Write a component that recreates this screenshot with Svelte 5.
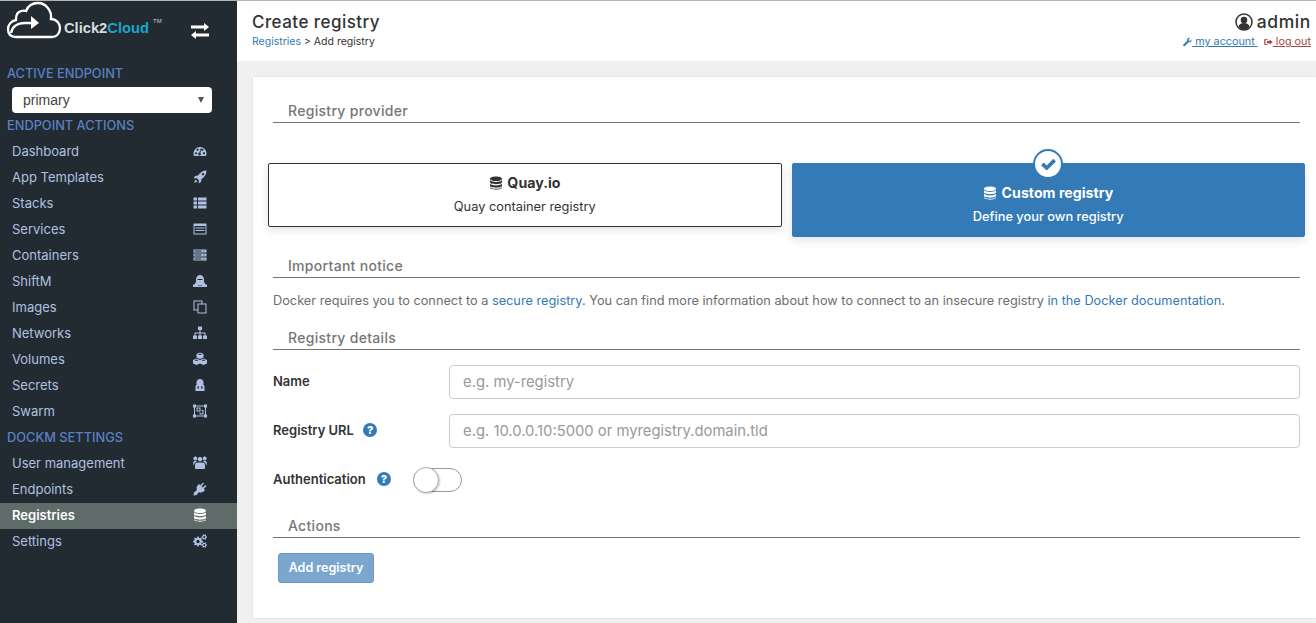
<script>
  function gear(cx, cy, R, r, hole, n) {
    const pts = [];
    const step = (Math.PI * 2) / n;
    for (let i = 0; i < n; i++) {
      const a = i * step;
      const w = step * 0.22;
      const at = (rad, ang) => `${(cx + rad * Math.cos(ang)).toFixed(2)} ${(cy + rad * Math.sin(ang)).toFixed(2)}`;
      pts.push(at(r, a - w * 1.4), at(R, a - w * 0.8), at(R, a + w * 0.8), at(r, a + w * 1.4));
    }
    const ring = `M${cx} ${cy - hole}a${hole} ${hole} 0 1 0 .01 0Z`;
    return `M${pts.join('L')}Z${ring}`;
  }

  const icons = {
    dashboard: 'M1 12A6.500 6.500 0 1 1 13 12ZM3 8.200a1 1 0 1 0 .01 0ZM4.600 4.800a1 1 0 1 0 .01 0ZM9.400 4.800a1 1 0 1 0 .01 0ZM11 8.200a1 1 0 1 0 .01 0ZM7.300 9 8.600 4.200 8 4 6.300 8.800a1.300 1.300 0 1 0 1 .2Z',
    rocket: 'M13.500.5C9.500.5 7 2.500 5 5.500L2 6 .5 8.500 3.500 8 6 10.500 5.500 13.500 8 12 8.500 9C11.500 7 13.500 4.500 13.500.5ZM10 3a1.200 1.200 0 1 0 .01 0ZM2.500 9.500 1 13l3.500-1.500Z',
    stacks: 'M.5 1.500h3.500v3H.5ZM5 1.500h8.500v3H5ZM.5 5.500h3.500v3H.5ZM5 5.500h8.500v3H5ZM.5 9.500h3.500v3H.5ZM5 9.500h8.500v3H5Z',
    services: 'M.5 1.500h13v11H.5ZM1.500 4v7.500h11V4ZM2.500 5.500h9v1h-9ZM2.500 8h9v1h-9Z',
    containers: 'M.5 1.500h13v3H.5ZM1.500 2.500v1h7v-1ZM10.500 2.500v1h1v-1ZM.5 5.500h13v3H.5ZM1.500 6.500v1h7v-1ZM10.500 6.500v1h1v-1ZM.5 9.500h13v3H.5ZM1.500 10.500v1h7v-1ZM10.500 10.500v1h1v-1Z',
    ship: 'M3 5.500C3 2.500 5 1 7 1s4 1.500 4 4.500V8l1.500 2.500H14V13H0v-2.500h1.500L3 8ZM4.500 5v1h5V5ZM5 11.500h4v-.500H5Z',
    clone: 'M.5.5h9v3h4v10h-9v-3h-4ZM1.500 1.500v8h3v-6h4v-2ZM5.500 4.500v8h7v-8Z',
    sitemap: 'M5 .5h4v3.500H7.500v2.500h5V9.500H14V13H10V9.500h1.500V7.500h-4v2H9V13H5V9.500h1.500v-2h-4v2H4V13H0V9.500h1.500v-3h5V4H5Z',
    cubes: 'M7 .5 10.500 2v3.500L7 7 3.500 5.500V2ZM3.500 6.500 7 8v3.500L3.500 13 0 11.500V8ZM10.500 6.500 14 8v3.500L10.500 13 7 11.500V8ZM7 1.500 5 2.300 7 3.100 9 2.300ZM3.500 7.500 1.500 8.300l2 .8 2-.8ZM10.500 7.500l-2 .8 2 .8 2-.8Z',
    secret: 'M2.500 13V8l1-1V5C3.500 2.500 5 1 7 1s3.500 1.500 3.500 4v2l1 1v5ZM4.500 8.500v2H6v-2ZM8 8.500v2h1.500v-2Z',
    swarm: 'M0 .5h3v1h8v-1h3v3h-1v7h1v3h-3v-1H3v1H0v-3h1v-7H0ZM3 2.500v1H2v7h1v1h8v-1h1v-7h-1v-1ZM3.500 3.500h4v4h-4ZM4.500 4.500v2h2v-2ZM8.500 6h2v4.500h-4V8.500h1V9.500h2v-2.500h-1Z',
    users: 'M7 .9a2.300 2.300 0 1 0 .01 0ZM2.300.6a1.900 1.900 0 1 0 .01 0ZM11.700.6a1.900 1.900 0 1 0 .01 0ZM4.500 6.500h5c1.500 0 2.500 1 2.500 3V12c0 .6-.5 1-1 1H3c-.5 0-1-.4-1-1V9.500c0-2 1-3 2.500-3ZM.3 9V6.500C.3 5.500 1 5 1.800 5h2c-.3.3-.5.7-.4 1-1.300.3-2.200 1.300-2.400 3ZM13.700 9V6.500C13.700 5.500 13 5 12.200 5h-2c.3.3.5.7.4 1 1.300.3 2.200 1.300 2.400 3Z',
    plug: 'M10 .5 11 1.500 8.500 4.200 9.800 5.500 12.500 3 13.500 4 10.800 6.700 12 8 11 9C9.500 10.500 7.500 11 6 10L3.500 13 1 13.500.5 13 1 10.500 4 8C3 6.500 3.500 4.500 5 3L6 2 7.300 3.200Z',
    database: 'M7 .5c3 0 6 .8 6 2.200S10 5 7 5 1 4.100 1 2.700 4 .5 7 .5ZM1 4.300C2 5.500 4.500 6 7 6s5-.5 6-1.700v2C13 7.500 10 8.200 7 8.200S1 7.500 1 6.300ZM1 7.800C2 9 4.500 9.400 7 9.400s5-.4 6-1.600v2C13 11 10 11.700 7 11.700S1 11 1 9.800ZM1 11.200c1 1.100 3.500 1.500 6 1.500s5-.4 6-1.500v.6c0 1.100-3 1.900-6 1.900s-6-.8-6-1.900Z',
    cogs: gear(5, 7.500, 5, 3.800, 1.700, 8) + gear(11.300, 3, 2.800, 2, 0.9, 6) + gear(11.300, 11, 2.800, 2, 0.9, 6)
  };

  const actions = [
    ['Dashboard', 'dashboard'], ['App Templates', 'rocket'], ['Stacks', 'stacks'],
    ['Services', 'services'], ['Containers', 'containers'], ['ShiftM', 'ship'],
    ['Images', 'clone'], ['Networks', 'sitemap'], ['Volumes', 'cubes'],
    ['Secrets', 'secret'], ['Swarm', 'swarm']
  ];
  const settings = [
    ['User management', 'users'], ['Endpoints', 'plug'],
    ['Registries', 'database', true], ['Settings', 'cogs']
  ];
</script>

{#snippet navRow(item)}
  <li class="nav-row" class:active={item[2]}>
    <span>{item[0]}</span>
    <svg class="nav-icon" viewBox="0 0 14 14"><path fill-rule="evenodd" d={icons[item[1]]} /></svg>
  </li>
{/snippet}

{#snippet db()}
  <svg class="db" viewBox="0 0 14 14"><path fill-rule="evenodd" d={icons.database} /></svg>
{/snippet}

{#snippet help()}
  <span class="help">?</span>
{/snippet}

<div class="page">
  <aside class="sidebar">
    <div class="brand">
      <svg class="cloud" viewBox="0 0 54 36" fill="none" stroke="#fff" stroke-width="2.300">
        <path d="M9 35H45C50 35 53 31 53 26 53 21 49 17 44 17 45 9 39 1 31 1 25 1 21 4 19 9 16 8 12 9 10 12 9 14 9 16 9 18 4 19 1 23 1 27 1 32 4 35 9 35Z" />
        <path d="M4 31C5 25 10 21 18 21H24" />
        <path d="M24 14 32 21 24 27Z" fill="#fff" stroke="none" />
      </svg>
      <span class="brand-name">Click2<b>Cloud</b></span>
      <span class="tm">TM</span>
      <svg class="swap" viewBox="0 0 18 16" fill="#fff">
        <path d="M0 2.500h13V0l5 4-5 4V5.500H0ZM18 10.500H5V8l-5 4 5 4v-2.500h13Z" />
      </svg>
    </div>
    <div class="nav-title">ACTIVE ENDPOINT</div>
    <div class="select-wrap">
      <select><option>primary</option></select>
    </div>
    <div class="nav-title">ENDPOINT ACTIONS</div>
    <ul>
      {#each actions as item}{@render navRow(item)}{/each}
    </ul>
    <div class="nav-title">DOCKM SETTINGS</div>
    <ul>
      {#each settings as item}{@render navRow(item)}{/each}
    </ul>
  </aside>

  <main class="main">
    <header class="topbar">
      <div>
        <h1>Create registry</h1>
        <div class="crumbs"><a href="#registries">Registries</a> &gt; Add registry</div>
      </div>
      <div class="user">
        <div class="user-name">
          <svg viewBox="0 0 18 18" class="user-icon">
            <circle cx="9" cy="9" r="8" fill="#fff" stroke="#333" stroke-width="1.500" />
            <circle cx="9" cy="7" r="3.300" fill="#333" />
            <path d="M3.500 14c.5-3 2.500-4 5.500-4s5 1 5.500 4c-1.500 1.700-3.500 2.500-5.500 2.500S5 15.700 3.500 14Z" fill="#333" />
          </svg>
          admin
        </div>
        <div class="user-links">
          <svg viewBox="0 0 12 12" class="mini blue"><path d="M11.500 2.500 9.300 4.500 7.800 4 7.500 2.700 9.500.5C8 0 6.500.5 5.800 1.700 5.300 2.600 5.300 3.500 5.600 4.300L.6 9.300c-.6.600-.6 1.400 0 1.900s1.300.5 1.900 0l5-5c1 .4 2 .2 2.800-.5 1-.9 1.400-2.300 1.200-3.200Z" /></svg>
          <a class="account" href="#account">{' my account '}</a>
          <svg viewBox="0 0 12 12" class="mini red"><path fill-rule="evenodd" d="M1.500 2h3.500v1H2v6h3v1H1.500C.7 10 .3 9.500.3 9V3c0-.5.400-1 1.200-1ZM4 4.500h3.500V2.500L11.500 6 7.500 9.500v-2H4Z" /></svg>
          <a class="logout" href="#logout">{' log out'}</a>
        </div>
      </div>
    </header>

    <section class="card">
      <h2 class="section first">Registry provider</h2>
      <div class="providers">
        <div class="provider">
          <div class="p-title">{@render db()} Quay.io</div>
          <div class="p-sub">Quay container registry</div>
        </div>
        <div class="provider selected">
          <span class="tick">
            <svg viewBox="0 0 14 14"><path d="M1.500 7.500 3.500 5.500 5.700 7.700 10.500 2.800 12.500 4.800 5.700 11.500Z" fill="#337ab7" /></svg>
          </span>
          <div class="p-title">{@render db()} Custom registry</div>
          <div class="p-sub">Define your own registry</div>
        </div>
      </div>

      <h2 class="section notice-head">Important notice</h2>
      <p class="notice">Docker requires you to connect to a <a href="#secure">secure registry</a>. You can find more information about how to connect to an insecure registry <a href="#docs">in the Docker documentation</a>.</p>

      <h2 class="section details-head">Registry details</h2>
      <div class="field name-field">
        <label for="name">Name</label>
        <input id="name" placeholder="e.g. my-registry" />
      </div>
      <div class="field url-field">
        <label for="url">Registry URL {@render help()}</label>
        <input id="url" placeholder="e.g. 10.0.0.10:5000 or myregistry.domain.tld" />
      </div>
      <div class="auth">
        <span class="auth-label">Authentication {@render help()}</span>
        <span class="toggle"><span class="knob"></span></span>
      </div>

      <h2 class="section actions-head">Actions</h2>
      <button class="submit" disabled>Add registry</button>
    </section>
  </main>
</div>

<style>
  :global(body) {
    margin: 0;
    background: #f0f0f0;
  }
  .page {
    display: flex;
    width: 1316px;
    height: 623px;
    overflow: hidden;
    font-family: Inter, "Noto Sans", sans-serif;
    font-size: 13px;
    color: #333;
  }
  .sidebar {
    flex: 0 0 237px;
    background: #212b31;
    border-top: 1px solid #b4b4b4;
    box-sizing: border-box;
    color: #b1c0e0;
  }
  .brand {
    position: relative;
    height: 60px;
  }
  .cloud {
    position: absolute;
    left: 7px;
    top: 1px;
    width: 54px;
    height: 36px;
    overflow: visible;
  }
  .brand-name {
    position: absolute;
    left: 64px;
    top: 19px;
    font: 700 14.700px "Liberation Sans", sans-serif;
    color: #d8dde0;
  }
  .brand-name b {
    color: #1ba6cc;
  }
  .tm {
    position: absolute;
    left: 153px;
    top: 17px;
    font: 6px "Liberation Sans", sans-serif;
    color: #c8ccd0;
  }
  .swap {
    position: absolute;
    left: 191px;
    top: 22px;
    width: 18px;
    height: 16px;
  }
  .nav-title {
    height: 26px;
    line-height: 26px;
    padding-left: 7px;
    font-size: 12.800px;
    font-weight: 500;
    color: #5c7fc4;
  }
  .select-wrap {
    position: relative;
    margin: 0 25px 0 12px;
    height: 26px;
  }
  .select-wrap::after {
    content: "";
    position: absolute;
    right: 8px;
    top: 10px;
    border: 3px solid transparent;
    border-top: 6px solid #555;
    border-bottom: 0;
  }
  select {
    appearance: none;
    display: block;
    box-sizing: border-box;
    width: 100%;
    height: 26px;
    padding: 0 0 0 11px;
    border: 0;
    border-radius: 4px;
    background: #fff;
    font: 14px "Liberation Sans", sans-serif;
    color: #444;
  }
  ul {
    list-style: none;
    margin: 0;
    padding: 0;
  }
  .nav-row {
    display: flex;
    align-items: center;
    justify-content: space-between;
    height: 26px;
    padding: 0 30px 2px 12px;
    box-sizing: border-box;
    font-size: 13px;
  }
  .nav-row.active {
    background: #5f6b68;
    color: #fff;
    font-weight: 600;
  }
  .nav-icon {
    width: 14px;
    height: 14px;
    fill: currentColor;
  }
  .main {
    flex: 1;
    min-width: 0;
  }
  .topbar {
    display: flex;
    justify-content: space-between;
    box-sizing: border-box;
    height: 61px;
    padding: 11px 5px 0 15px;
    background: #fff;
    border-top: 1px solid #b4b4b4;
  }
  h1 {
    margin: 0;
    font-size: 17px;
    line-height: 20px;
    font-weight: 500;
    letter-spacing: .45px;
    color: #333;
  }
  .crumbs {
    margin-top: 3px;
    font-size: 10.500px;
    line-height: 14px;
    color: #333;
  }
  a {
    color: #337ab7;
    text-decoration: none;
  }
  .user {
    text-align: right;
  }
  .user-name {
    display: flex;
    align-items: center;
    justify-content: flex-end;
    gap: 4px;
    font-size: 17.500px;
    line-height: 20px;
    font-weight: 500;
    letter-spacing: .6px;
    color: #333;
  }
  .user-icon {
    width: 18px;
    height: 18px;
  }
  .user-links {
    display: flex;
    align-items: center;
    justify-content: flex-end;
    margin-top: 3px;
    font-size: 10.800px;
    line-height: 14px;
  }
  .mini {
    width: 9px;
    height: 10px;
  }
  .mini.blue { fill: #337ab7; }
  .mini.red { fill: #a94442; margin-left: 6px; }
  .account { text-decoration: underline; white-space: pre; }
  .logout { color: #a94442; text-decoration: underline; white-space: pre; }
  .card {
    box-sizing: border-box;
    height: 541px;
    margin: 16px 0 0 16px;
    padding: 0 16px 0 20px;
    background: #fff;
    box-shadow: 0 0 2px rgba(0, 0, 0, .12);
  }
  .section {
    margin: 0;
    padding-left: 15px;
    height: 21px;
    line-height: 20px;
    border-bottom: 1px solid #777;
    font-size: 14px;
    font-weight: 500;
    letter-spacing: .3px;
    color: #767676;
    box-sizing: content-box;
  }
  .section.first { padding-top: 24px; }
  .providers {
    display: flex;
    align-items: flex-start;
    gap: 10px;
    margin: 40px -5px 0 -5px;
  }
  .provider {
    position: relative;
    flex: 1;
    box-sizing: border-box;
    height: 64px;
    padding-top: 9px;
    text-align: center;
    background: #fff;
    border: 1px solid #333;
    border-radius: 2px;
    box-shadow: 0 3px 8px rgba(0, 0, 0, .12);
  }
  .provider.selected {
    height: 74px;
    padding-top: 19px;
    background: #337ab7;
    border-color: #337ab7;
    color: #fff;
  }
  .p-title {
    font-size: 14.200px;
    line-height: 20px;
    font-weight: 700;
  }
  .db {
    width: 14px;
    height: 14px;
    margin-right: 1px;
    fill: currentColor;
    vertical-align: -2px;
  }
  .p-sub {
    margin-top: 5px;
    font-size: 12.800px;
    line-height: 17px;
  }
  .selected .p-sub { font-weight: 500; }
  .tick {
    position: absolute;
    left: 50%;
    top: -15px;
    display: flex;
    align-items: center;
    justify-content: center;
    box-sizing: border-box;
    width: 30px;
    height: 30px;
    margin-left: -15px;
    background: #fff;
    border: 2px solid #337ab7;
    border-radius: 50%;
  }
  .tick svg {
    width: 19px;
    height: 19px;
  }
  .notice-head { margin-top: 19px; }
  .notice {
    margin: 14px 0 0;
    font-size: 12.750px;
    line-height: 17px;
    white-space: nowrap;
    color: #6e6e6e;
  }
  .details-head { margin-top: 19px; }
  .field {
    display: flex;
    align-items: center;
  }
  .name-field { margin-top: 15px; }
  .url-field { margin-top: 15px; }
  label, .auth-label {
    flex: 0 0 176px;
    font-size: 13px;
    font-weight: 600;
    color: #333;
    padding-bottom: 2px;
    box-sizing: border-box;
  }
  input {
    flex: 1;
    min-width: 0;
    box-sizing: border-box;
    height: 34px;
    padding: 0 13px;
    border: 1px solid #ccc;
    border-radius: 4px;
    background: #fff;
    font: 14.800px Inter, sans-serif;
  }
  input::placeholder {
    color: #999;
    opacity: 1;
  }
  .help {
    display: inline-block;
    width: 14px;
    height: 14px;
    margin-left: 6px;
    border-radius: 50%;
    background: #337ab7;
    color: #fff;
    font-size: 11px;
    line-height: 14px;
    font-weight: 800;
    text-align: center;
    vertical-align: 1px;
  }
  .auth {
    display: flex;
    align-items: center;
    margin-top: 19px;
    height: 26px;
  }
  .auth-label {
    flex: 0 0 140px;
  }
  .auth-label .help {
    margin-left: 8px;
  }
  .toggle {
    position: relative;
    box-sizing: border-box;
    width: 49px;
    height: 24px;
    border: 1px solid #999;
    border-radius: 12px;
    background: #fff;
  }
  .knob {
    position: absolute;
    left: -1px;
    top: -2px;
    box-sizing: border-box;
    width: 26px;
    height: 26px;
    border: 1px solid #aaa;
    border-radius: 50%;
    background: #fff;
    box-shadow: 1px 1px 2px rgba(0, 0, 0, .2);
  }
  .actions-head { margin-top: 23px; }
  .submit {
    display: block;
    margin: 15px 0 0 5px;
    width: 96px;
    height: 30px;
    padding: 0 0 1px;
    border: 1px solid #6c9cc6;
    border-radius: 3px;
    background: #7ba7cf;
    color: #fff;
    font: 600 12.500px Inter, sans-serif;
  }
</style>
